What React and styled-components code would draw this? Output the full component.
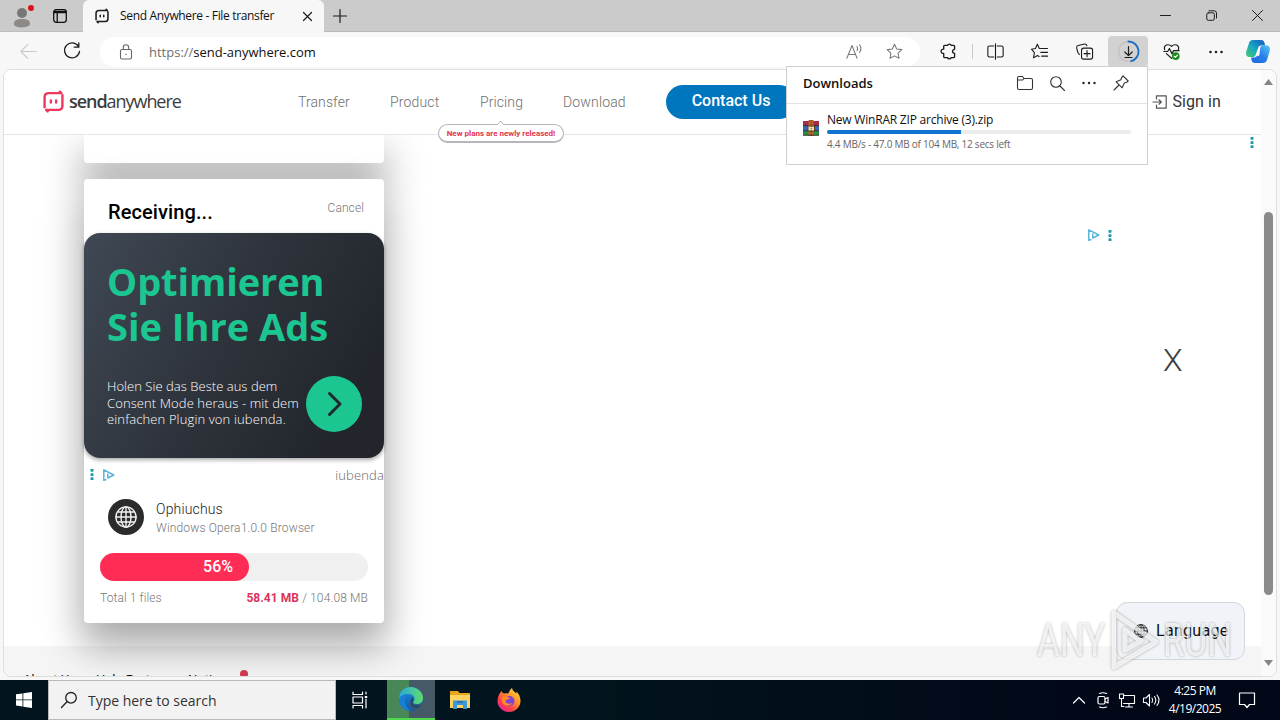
import React from 'react';
import styled, { createGlobalStyle } from 'styled-components';

const GlobalStyle = createGlobalStyle`
  * {
    box-sizing: border-box;
  }

  body {
    margin: 0;
    overflow: hidden;
    font-family: Roboto, "Liberation Sans", sans-serif;
  }

  svg {
    display: block;
    flex: none;
    overflow: visible;
  }
`;

const Screen = styled.div`
  width: 1280px;
  height: 720px;
  display: flex;
  flex-direction: column;
  overflow: hidden;
  background: #f7f7f7;
`;

const Text = styled.span`
  font-family: ${p => p.$family || 'inherit'};
  font-size: ${p => p.$size}px;
  font-weight: ${p => p.$weight || 400};
  line-height: ${p => p.$line || 20}px;
  letter-spacing: ${p => p.$track || 0}px;
  color: ${p => p.$color || '#111'};
  white-space: nowrap;
`;

const ui = '"Open Sans", "Noto Sans", sans-serif';

// ---------- browser chrome ----------

const TabStrip = styled.div`
  height: 32px;
  flex: none;
  display: flex;
  background: #cbcbcb;
`;

const TabTools = styled.div`
  width: 83px;
  padding-left: 12px;
  display: flex;
  align-items: center;
  gap: 19px;
  border-bottom: 1px solid #bdbdbd;
`;

const Tab = styled.div`
  width: 241px;
  padding: 0 12px 0 12px;
  display: flex;
  align-items: center;
  background: #f7f7f7;
  border-radius: 6px 6px 0 0;

  > span {
    margin-left: 11px;
    flex: 1;
  }
`;

const TabRest = styled.div`
  flex: 1;
  padding: 0 17px 0 9px;
  display: flex;
  align-items: center;
  border-bottom: 1px solid #b9b9b9;
`;

const WindowButtons = styled.div`
  margin-left: auto;
  display: flex;
  align-items: center;
  gap: 35px;
`;

const Toolbar = styled.div`
  height: 37px;
  flex: none;
  padding: 4px 0 2px 20px;
  display: flex;
  align-items: center;
`;

const Address = styled.div`
  width: 820px;
  height: 30px;
  flex: none;
  margin-left: 18px;
  padding: 0 17px 0 18px;
  display: flex;
  align-items: center;
  background: #fff;
  border-radius: 15px;

  > span {
    margin-left: 15px;
    flex: 1;
  }

  > svg + svg {
    margin-left: 23px;
  }
`;

const Tools = styled.div`
  flex: 1;
  margin-left: 16px;
  display: flex;
  align-items: center;
`;

const Tool = styled.div`
  width: ${p => p.$width || 44}px;
  height: 31px;
  flex: none;
  display: flex;
  align-items: center;
  justify-content: center;
  border-radius: 4px;
  background: ${p => (p.$active ? '#d2d2d2' : 'none')};
`;

const Divider = styled.div`
  width: 1px;
  height: 15px;
  background: #c8c8c8;
`;

const Stroke = ({ size = 18, color = '#1b1b1b', width = 1.2, box = 20, children }) => (
  <svg
    width={size}
    height={size}
    viewBox={`0 0 ${box} ${box}`}
    fill="none"
    stroke={color}
    strokeWidth={width}
    strokeLinecap="round"
    strokeLinejoin="round"
  >
    {children}
  </svg>
);

const BotGlyph = ({ size, color, width }) => (
  <Stroke size={size} color={color} width={width}>
    <path d="M1.500 13.500V6q0-4 4-4h12l-1.500-1.500M18.500 6.500v7.500q0 4-4 4H3l1.500 1.500M1.500 13.500v2M18.500 4v2.500" />
    <path d="M7.500 9v2M12.500 9v2" />
  </Stroke>
);

const Star = ({ size = 18, color }) => (
  <Stroke size={size} color={color}>
    <path d="M10 1.500l2.600 5.500 6 .8-4.400 4.200 1.100 6L10 15.100 4.700 18l1.100-6L1.400 7.800l6-.8z" />
  </Stroke>
);

const Dots = ({ width = 14, color = '#222', r = 1.3 }) => (
  <svg width={width} height="4" viewBox={`0 0 ${width} 4`} fill={color}>
    <circle cx="1.500" cy="2" r={r} />
    <circle cx={width / 2} cy="2" r={r} />
    <circle cx={width - 1.5} cy="2" r={r} />
  </svg>
);

const Copilot = () => (
  <svg width="24" height="23" viewBox="0 0 24 23">
    <defs>
      <linearGradient id="cpA" x1="0" y1="1" x2="1" y2="0">
        <stop offset="0" stopColor="#49c96c" />
        <stop offset=".45" stopColor="#18a9bd" />
        <stop offset="1" stopColor="#1557c8" />
      </linearGradient>
      <linearGradient id="cpB" x1="0" y1="1" x2="1" y2="0">
        <stop offset="0" stopColor="#1769e0" />
        <stop offset=".5" stopColor="#2b7ee8" />
        <stop offset="1" stopColor="#52c8f5" />
      </linearGradient>
    </defs>
    <path d="M7 0h8c2 0 3 1 3.500 3l.7 2.500h-3.700c-2 0-3 1-3.600 3L9.600 15c-.6 1.500-1.600 2-3.500 2H3.500C.5 17-.5 14.500.3 11.500L3 3c.6-2 2-3 4-3z" fill="url(#cpA)" />
    <path d="M17 23H9c-2 0-3-1-3.500-3L5 17.500h3c2 0 3-1 3.600-3L13.900 8C14.500 6.300 15.500 5.500 17.500 5.500h3c3 0 4 2.500 3.200 5.500L21 20c-.6 2-2 3-4 3z" fill="url(#cpB)" />
    <path d="M10.300 14.500L12.800 7.500c.4-1 .8-1.500 1.700-2l-1 9c-.4 1-.9 1.500-1.900 1.500z" fill="#f7f7f7" />
  </svg>
);

const BrowserTop = () => (
  <>
    <TabStrip>
      <TabTools>
        <svg width="22" height="24" viewBox="0 0 22 24">
          <circle cx="10" cy="9" r="5" fill="#777" />
          <path d="M2 20c0-4 3-5 8-5s8 1 8 5-16 5-16 0z" fill="#8c8986" />
          <circle cx="19" cy="4" r="3" fill="#d8141c" />
        </svg>
        <Stroke size={14} box={14} color="#111" width={1.3}>
          <rect x=".7" y=".7" width="12.600" height="12.600" rx="2.500" />
          <path d="M1 2.500h12M1 3.700h12M4.200 4v9" />
        </Stroke>
      </TabTools>
      <Tab>
        <BotGlyph size={14} color="#1c1c1c" width={2.2} />
        <Text $family={ui} $size={12} $track={-0.34}>Send Anywhere - File transfer</Text>
        <Stroke size={9} box={9} width={1.2}><path d="M.5.5l8 8M8.500.5l-8 8" /></Stroke>
      </Tab>
      <TabRest>
        <Stroke size={14} box={14} width={1.2}><path d="M7 .5v13M.5 7h13" /></Stroke>
        <WindowButtons>
          <Stroke size={11} box={11} width={1}><path d="M.5 5.500h10" /></Stroke>
          <Stroke size={11} box={11} width={1}>
            <rect x=".8" y="2.800" width="7.500" height="7.500" rx="1.500" />
            <path d="M3 .8h5.200q2.300 0 2.300 2.300v5" />
          </Stroke>
          <Stroke size={11} box={11} width={1}><path d="M.5.5l10 10M10.500.5l-10 10" /></Stroke>
        </WindowButtons>
      </TabRest>
    </TabStrip>
    <Toolbar>
      <Stroke size={17} color="#c9c9c9" width={1.3}><path d="M19 10H1M9 2l-8 8 8 8" /></Stroke>
      <Stroke size={45} box={45} width={1.3}>
        <path d="M41.500 17.500a7.500 7.500 0 1 0 1 5M41.800 14v4.200h-4.500" />
      </Stroke>
      <Address>
        <Stroke size={16} box={16} color="#666" width={1.100}>
          <rect x="2.500" y="5.500" width="11" height="9.500" rx="1.500" />
          <path d="M5.300 5.300V3.500a2.700 2.700 0 0 1 5.400 0v1.800M8 10v.6" />
        </Stroke>
        <Text $family={ui} $size={13} $line={18} $track={-0.02}>
          <Text as="span" $size={13} $color="#707070">https://</Text>send-anywhere.com
        </Text>
        <Stroke size={17} color="#777" width={1.2}>
          <path d="M1 18L7 3l6 15M3 13.500h8M13 4q1.500 2.500 0 5M16 2q3 4.500 0 9" />
        </Stroke>
        <Star size={17} color="#777" />
      </Address>
      <Tools>
        <Tool $width={22}>
          <Stroke size={17} box={18} width={1.4}>
            <path d="M5 3.500q0-1 1-1h3a2.200 2.200 0 0 1 4 0h2.500q1 0 1 1v3.200a2 2 0 1 0 0 4.200v3.600q0 1-1 1H13a2.200 2.200 0 0 1-4 0H6q-1 0-1-1V11a2.300 2.300 0 1 1 0-4.500z" />
          </Stroke>
        </Tool>
        <Tool $width={28}><Divider /></Tool>
        <Tool $width={18}>
          <Stroke size={17} width={1.300}>
            <path d="M8 3.500H3q-2 0-2 2v9q0 2 2 2h5M12 3.500h5q2 0 2 2v9q0 2-2 2h-5M10 1v18" />
          </Stroke>
        </Tool>
        <Tool $width={71}>
          <Stroke size={17} width={1.300}>
            <path d="M12 6.500H9.800L7.500 1.500 5.200 6.500l-4.700.8L4 11.200 3 17.500l4.500-2.800 2 1.200M13 6.500h6.500M11.500 11h8M12.500 15.500h7" />
          </Stroke>
        </Tool>
        <Tool $width={18}>
          <Stroke size={17} width={1.3}>
            <rect x="6.500" y="6" width="13" height="13" rx="2.500" />
            <path d="M13 9v7M9.500 12.500h7M4 13.500Q2 12 1.500 9L.8 5.500Q.5 3.500 2.500 3L10 1.200q2-.3 2.800 2" />
          </Stroke>
        </Tool>
        <Tool $width={15} />
        <Tool $active $width={40}>
          <Stroke size={21} box={21} width={1.200}>
            <path d="M10.500 5.500v9M6.800 11l3.700 3.700 3.700-3.700M7 16.500h7" />
            <path d="M10.500.5A10 10 0 0 0 10.500 20.500" stroke="#c4c4c4" strokeWidth="1.500" />
            <path d="M10.500.5a10 10 0 0 1 2.500 19.700" stroke="#1e6fc4" strokeWidth="1.900" />
          </Stroke>
        </Tool>
        <Tool $width={46}>
          <Stroke size={17} width={1.400}>
            <path d="M2 8Q.5 4 4 2.300q3.500-1 6 1.700 2.500-2.700 6-1.700Q19.500 4 18 8M1 10h4.500l2-3.500 3 6 2-3.500H19M4 12.500l6 5.500" />
            <circle cx="15" cy="15.500" r="4.500" fill="#1b8a1b" stroke="none" />
            <path d="M13 15.500l1.500 1.500 2.500-2.800" stroke="#fff" />
          </Stroke>
        </Tool>
        <Tool><Dots /></Tool>
        <Tool $width={40}><Copilot /></Tool>
      </Tools>
    </Toolbar>
  </>
);

// ---------- download flyout ----------

const Flyout = styled.div`
  position: absolute;
  left: 786px;
  top: 66px;
  z-index: 5;
  width: 362px;
  height: 99px;
  background: #fff;
  border: 1px solid #cfcfcf;
`;

const FlyoutHead = styled.div`
  height: 37px;
  padding: 0 18px 4px 16px;
  display: flex;
  align-items: center;
  border-bottom: 1px solid #e2e2e2;

  > span {
    flex: 1;
  }
`;

const FlyoutTools = styled.div`
  display: flex;
  align-items: center;
  gap: 17px;
`;

const FlyoutItem = styled.div`
  padding: 9px 16px 0;
  display: flex;
  gap: 8px;
`;

const RarSlot = styled.div`
  padding-top: 7px;
`;

const FlyoutInfo = styled.div`
  flex: 1;
  display: flex;
  flex-direction: column;
`;

const ThinBar = styled.div`
  height: 4px;
  margin: 3px 0 2px;
  border-radius: 2px;
  background: linear-gradient(90deg, #0f73d0 44%, #ececec 44%);
`;

const RarIcon = () => (
  <svg width="16" height="16" viewBox="0 0 16 16">
    <rect y="1" width="16" height="5" fill="#a32c4d" />
    <rect y="6" width="16" height="5" fill="#3568b8" />
    <rect y="11" width="16" height="4.500" fill="#2f8a42" />
    <rect x="5.500" width="5" height="16" fill="#b8622c" />
    <path d="M5 6h6.500v5H5z" fill="#f0dcae" stroke="#58402a" strokeWidth="1" />
    <path d="M0 5.700h5M11 5.700h5M0 10.800h5M11 10.800h5M0 15.300h16" stroke="#222" strokeWidth=".7" />
    <path d="M8.200 0v16" stroke="#6c4526" strokeDasharray="1 1" />
  </svg>
);

const Downloads = () => (
  <Flyout>
    <FlyoutHead>
      <Text $family={ui} $size={13} $weight={600} $track={0}>Downloads</Text>
      <FlyoutTools>
        <Stroke size={16} box={16} color="#333" width={1.100}>
          <path d="M.5 4.500V3q0-1.500 1.500-1.500h3.500L7 3.500h7q1.500 0 1.500 1.500v8q0 1.500-1.500 1.500H2Q.5 14.500.5 13zM.5 5h5.200L7 3.500" />
        </Stroke>
        <Stroke size={15} box={15} color="#333" width={1.100}>
          <circle cx="6" cy="6" r="5.300" /><path d="M10 10l4.500 4.500" />
        </Stroke>
        <Dots width={14} r={1.2} />
        <Stroke size={16} box={16} color="#333" width={1.100}>
          <path d="M10 .8l5.200 5.200-1.500 1.200-2.500.9-2 4.700-6-6 4.700-2L8.800 2.300zM6 10L1 15" />
        </Stroke>
      </FlyoutTools>
    </FlyoutHead>
    <FlyoutItem>
      <RarSlot><RarIcon /></RarSlot>
      <FlyoutInfo>
        <Text $family={ui} $size={12} $line={14} $track={-0.21}>New WinRAR ZIP archive (3).zip</Text>
        <ThinBar />
        <Text $family={ui} $size={10} $line={16} $color="#666" $track={-0.24}>
          4.4 MB/s - 47.0 MB of 104 MB, 12 secs left
        </Text>
      </FlyoutInfo>
    </FlyoutItem>
  </Flyout>
);

// ---------- page ----------

const Frame = styled.div`
  position: relative;
  height: 608px;
  flex: none;
  margin: 0 3px;
  display: flex;
  overflow: hidden;
  background: #fff;
  border: 1px solid #dedede;
  border-radius: 8px;
`;

const Page = styled.div`
  flex: 1;
  display: flex;
  flex-direction: column;
`;

const Header = styled.header`
  position: relative;
  z-index: 2;
  height: 65px;
  flex: none;
  padding: 0 40px 0 39px;
  display: flex;
  align-items: center;
  background: #fff;
  border-bottom: 1px solid #e6e6e6;
`;

const Logo = styled.div`
  width: 255px;
  display: flex;
  align-items: center;
  gap: 5px;
  padding-bottom: 2px;
`;

const Nav = styled.nav`
  display: flex;
  gap: 40px;
`;

const NavItem = styled.div`
  position: relative;
  width: ${p => p.$width}px;
`;

const Balloon = styled.div`
  position: absolute;
  top: 32px;
  left: -42px;
  width: 126px;
  height: 19px;
  padding-top: 1px;
  display: flex;
  align-items: center;
  justify-content: center;
  background: #fff;
  border: 1px solid #b5b5bb;
  border-bottom-width: 2px;
  border-radius: 10px;
`;

const BalloonTip = styled.svg`
  position: absolute;
  top: -5px;
  left: 57px;
`;

const ContactButton = styled.div`
  width: 130px;
  height: 34px;
  margin-left: 40px;
  padding-bottom: 3px;
  display: flex;
  align-items: center;
  justify-content: center;
  background: #0076be;
  border-radius: 17px;
`;

const SignIn = styled.div`
  margin-left: auto;
  display: flex;
  align-items: center;
  gap: 5px;
`;

const Body = styled.main`
  flex: 1;
  min-height: 0;
  display: flex;
  flex-direction: column;
`;

const Content = styled.div`
  position: relative;
  z-index: 1;
  height: 511px;
  flex: none;
  padding-left: 80px;
`;

const Card = styled.section`
  width: 300px;
  height: ${p => p.$height}px;
  margin-bottom: 16px;
  background: #fff;
  border-radius: ${p => (p.$cut ? '0 0 4px 4px' : '4px')};
  box-shadow: 0 20px 38px 3px rgba(0, 0, 0, .34);
  position: relative;
  z-index: ${p => (p.$cut ? 0 : 1)};
`;

const CardHead = styled.div`
  height: 54px;
  padding: 19px 20px 0 24px;
  display: flex;
  justify-content: space-between;
`;

const Ad = styled.div`
  height: 225px;
  padding: 26px 22px 0 23px;
  background: linear-gradient(118deg, #3f4854 0%, #2f343c 45%, #22252c 85%);
  border-radius: 16px;
  box-shadow: 0 2px 4px rgba(0, 0, 0, .35);
`;

const AdTitle = styled.div`
  font: 700 38px/45px "Open Sans", "Noto Sans", sans-serif;
  letter-spacing: ${p => p.$track}px;
  color: #1cc691;
  white-space: nowrap;
`;

const AdRow = styled.div`
  margin-top: 27px;
  display: flex;
  justify-content: space-between;
`;

const AdCopy = styled.div`
  padding-top: 2px;
  display: flex;
  flex-direction: column;
`;

const Arrow = styled.div`
  width: 56px;
  height: 56px;
  display: flex;
  align-items: center;
  justify-content: center;
  border-radius: 50%;
  background: #1cc691;
`;

const AdFoot = styled.div`
  height: 33px;
  padding-left: 6px;
  display: flex;
  align-items: center;

  > svg + svg {
    margin-left: 9px;
  }

  > span {
    margin-left: auto;
    padding-top: 1px;
  }
`;

const Device = styled.div`
  padding: 8px 24px 0;
  display: flex;
  gap: 12px;
`;

const DeviceBadge = styled.div`
  width: 36px;
  height: 36px;
  display: flex;
  align-items: center;
  justify-content: center;
  border-radius: 50%;
  background: #2b2b2b;
`;

const DeviceText = styled.div`
  height: 36px;
  display: flex;
  flex-direction: column;
`;

const Progress = styled.div`
  height: 28px;
  margin: 18px 16px 0;
  border-radius: 14px;
  background: #f0f0f0;
`;

const ProgressFill = styled.div`
  height: 28px;
  padding-right: 16px;
  display: flex;
  align-items: center;
  justify-content: flex-end;
  border-radius: 14px;
  background: #ff2d55;
`;

const Totals = styled.div`
  padding: 7px 16px 0;
  display: flex;
  justify-content: space-between;
`;

const Footer = styled.footer`
  flex: 1;
  padding: 24px 0 0 19px;
  display: flex;
  background: #f5f5f5;
`;

const FooterLink = styled(Text)`
  width: ${p => p.$width}px;
`;

const RedDot = styled.div`
  width: 8px;
  height: 8px;
  border-radius: 50%;
  background: #d63a52;
`;

const Scrollbar = styled.div`
  width: 15px;
  padding: 9px 0 10px;
  display: flex;
  flex-direction: column;
  align-items: center;
  background: #fafafa;
`;

const Thumb = styled.div`
  width: 9px;
  height: 383px;
  margin-top: 127px;
  margin-bottom: auto;
  border-radius: 5px;
  background: #8a8a8a;
`;

// ads and the language button float above the page content
const Float = styled.div`
  position: absolute;
  left: ${p => p.$x}px;
  top: ${p => p.$y}px;
  z-index: 3;
  display: flex;
  align-items: center;
  gap: 8px;
`;

const LanguageButton = styled(Float)`
  width: 129px;
  height: 58px;
  padding-left: 17px;
  background: #f0f3f7;
  border: 1px solid #d3d6da;
  border-radius: 11px;
`;

const Watermark = styled(Float)`
  z-index: 4;
  gap: 2px;
  opacity: .85;
  filter: drop-shadow(0 0 1.500px rgba(0, 0, 0, .45));
`;

const MarkText = styled.span`
  font: 400 46px/44px Roboto, sans-serif;
  display: block;
  width: ${p => p.$width}px;
  color: rgba(255, 255, 255, .75);
  transform: scaleX(.76);
  transform-origin: left;
`;

const AdDots = () => (
  <svg width="4" height="11" viewBox="0 0 4 11" fill="#1c9aad">
    <rect x=".5" y="0" width="3" height="2.700" rx=".6" />
    <rect x=".5" y="4.200" width="3" height="2.700" rx=".6" />
    <rect x=".5" y="8.300" width="3" height="2.700" rx=".6" />
  </svg>
);

const AdPlay = () => (
  <svg width="12" height="12" viewBox="0 0 12 12" fill="none" stroke="#5cb3dc" strokeWidth="1.500" strokeLinejoin="round">
    <path d="M3.500 10.500L.8 11.200V.8l10 5.200-6 3V4.500" />
  </svg>
);

const Globe = ({ size, color, width = 1.2 }) => (
  <Stroke size={size} box={24} color={color} width={width}>
    <circle cx="12" cy="12" r="11" />
    <ellipse cx="12" cy="12" rx="5.500" ry="11" />
    <path d="M12 1v22M1 12h22M3 6.500h18M3 17.500h18" />
  </Stroke>
);

const WebPage = () => (
  <Frame>
    <Page>
      <Header>
        <Logo>
          <BotGlyph size={21} color="#f0385f" width={2.3} />
          <Text $family={ui} $size={18} $weight={600} $track={-1.05} $color="#3c3c3c">
            send<Text as="span" $size={18} $track={-1.05} $color="#3c3c3c">anywhere</Text>
          </Text>
        </Logo>
        <Nav>
          <NavItem $width={52}><Text $size={14} $weight={300} $color="#6f6f6f" $track={0.1}>Transfer</Text></NavItem>
          <NavItem $width={50}><Text $size={14} $weight={300} $color="#6f6f6f" $track={0.15}>Product</Text></NavItem>
          <NavItem $width={43}>
            <Text $size={14} $weight={300} $color="#6f6f6f" $track={0.1}>Pricing</Text>
            <Balloon>
              <BalloonTip width="9" height="5" viewBox="0 0 9 5">
                <path d="M1 5l3.500-4L8 5" fill="#fff" stroke="#b5b5bb" />
              </BalloonTip>
              <Text $size={8} $weight={700} $line={12} $color="#e2334f">New plans are newly released!</Text>
            </Balloon>
          </NavItem>
          <NavItem $width={63}><Text $size={14} $weight={300} $color="#6f6f6f" $track={0.15}>Download</Text></NavItem>
        </Nav>
        <ContactButton>
          <Text $size={16} $weight={500} $color="#fff">Contact Us</Text>
        </ContactButton>
        <SignIn>
          <Stroke size={14} box={14} color="#555" width={1.200}>
            <path d="M3.500 4V.8h9.700v12.400H3.500V10M0 7h8M6 4.800L8.300 7 6 9.200" />
          </Stroke>
          <Text $size={16} $color="#333" $track={0.1}>Sign in</Text>
        </SignIn>
      </Header>
      <Body>
        <Content>
          <Card $cut $height={28} />
          <Card $height={444}>
            <CardHead>
              <Text $size={20} $weight={500} $line={28} $color="#000" $track={0.1}>Receiving...</Text>
              <Text $size={12} $weight={300} $color="#777" $track={0.1}>Cancel</Text>
            </CardHead>
            <Ad>
              <AdTitle $track={-0.1}>Optimieren</AdTitle>
              <AdTitle $track={0}>Sie Ihre Ads</AdTitle>
              <AdRow>
                <AdCopy>
                  <Text $family={ui} $size={13} $weight={300} $line={16.5} $color="#fff" $track={0.04}>Holen Sie das Beste aus dem</Text>
                  <Text $family={ui} $size={13} $weight={300} $line={16.5} $color="#fff" $track={0.1}>Consent Mode heraus - mit dem</Text>
                  <Text $family={ui} $size={13} $weight={300} $line={16.5} $color="#fff" $track={0.13}>einfachen Plugin von iubenda.</Text>
                </AdCopy>
                <Arrow>
                  <Stroke size={24} box={24} color="#23282f" width={3}><path d="M7.500 1.500L18 12 7.500 22.500" /></Stroke>
                </Arrow>
              </AdRow>
            </Ad>
            <AdFoot>
              <AdDots />
              <AdPlay />
              <Text $family={ui} $size={13} $weight={300} $color="#666" $track={0.15}>iubenda</Text>
            </AdFoot>
            <Device>
              <DeviceBadge><Globe size={22} color="#f2f2f2" width={1.500} /></DeviceBadge>
              <DeviceText>
                <Text $size={14} $weight={300} $color="#222" $track={0.15}>Ophiuchus</Text>
                <Text $size={12} $weight={300} $line={18} $color="#777" $track={0.15}>Windows Opera1.0.0 Browser</Text>
              </DeviceText>
            </Device>
            <Progress>
              <ProgressFill style={{ width: `${(149 / 268) * 100}%` }}>
                <Text $size={16} $weight={500} $color="#fff">56%</Text>
              </ProgressFill>
            </Progress>
            <Totals>
              <Text $size={12} $weight={300} $color="#777" $track={0.1}>Total 1 files</Text>
              <Text $size={12} $weight={300} $color="#777" $track={0.12}>
                <Text as="b" $size={12} $weight={700} $color="#d9345a" $track={0.07}>58.41 MB</Text> / 104.08 MB
              </Text>
            </Totals>
          </Card>
        </Content>
        <Footer>
          <FooterLink $size={13} $width={73}>About Us</FooterLink>
          <FooterLink $size={13} $width={92}>Help Partners</FooterLink>
          <FooterLink $size={13} $width={52}>Notice</FooterLink>
          <RedDot />
        </Footer>
      </Body>
    </Page>
    <Scrollbar>
      <svg width="9" height="6" viewBox="0 0 9 6" fill="#858585"><path d="M0 6L4.500 0 9 6z" /></svg>
      <Thumb />
      <svg width="9" height="6" viewBox="0 0 9 6" fill="#858585"><path d="M0 0h9L4.500 6z" /></svg>
    </Scrollbar>
    <Float $x={1246} $y={67}><AdDots /></Float>
    <Float $x={1084} $y={159}><AdPlay /><AdDots /></Float>
    <Float $x={1159} $y={275}>
      <Text $size={32} $line={30} $weight={300} $color="#3c4043" $track={-0.5}>X</Text>
    </Float>
    <LanguageButton $x={1112} $y={532}>
      <Globe size={14} color="#333" width={1.700} />
      <Text $size={16} $color="#111" $track={0.3}>Language</Text>
    </LanguageButton>
    <Watermark $x={1033} $y={540}>
      <MarkText $width={70}>ANY</MarkText>
      <svg width="52" height="60" viewBox="0 0 52 60" fill="none" stroke="rgba(255,255,255,.8)" strokeWidth="5" strokeLinejoin="round">
        <path d="M5 3v54l42-25z" /><path d="M16 20v20l16-9z" />
      </svg>
      <MarkText $width={70}>RUN</MarkText>
    </Watermark>
  </Frame>
);

// ---------- taskbar ----------

const TaskbarRow = styled.div`
  height: 40px;
  margin-top: auto;
  flex: none;
  display: flex;
  align-items: center;
  background: linear-gradient(90deg, #02141d 0%, #02141d 45%, #020818 85%, #020818 100%);
`;

const TaskSlot = styled.div`
  width: ${p => p.$width || 48}px;
  height: 40px;
  display: flex;
  align-items: center;
  justify-content: center;
  ${p => p.$active && `
    margin-left: 3px;
    background: linear-gradient(90deg, #488757 46%, #455a66 46%);
    border-bottom: 2px solid #4fd84a;
  `}
`;

const SearchBox = styled.div`
  width: 288px;
  height: 40px;
  padding-left: 12px;
  display: flex;
  align-items: center;
  gap: 11px;
  background: #f2f2f2;
  border: 1px solid #b9b9b9;

  > span {
    padding-top: 1px;
  }
`;

const Tray = styled.div`
  margin-left: auto;
  padding-right: 25px;
  display: flex;
  align-items: center;
  gap: 8px;
`;

const Clock = styled.div`
  width: 56px;
  margin-right: 8px;
  display: flex;
  flex-direction: column;
  align-items: center;
`;

const EdgeIcon = () => (
  <svg width="24" height="24" viewBox="0 0 24 24">
    <defs>
      <linearGradient id="edTop" x1="0" y1="0" x2="1" y2="0">
        <stop offset="0" stopColor="#2aa9e0" />
        <stop offset="1" stopColor="#5edc6a" />
      </linearGradient>
      <linearGradient id="edLow" x1="0" y1="0" x2="0" y2="1">
        <stop offset="0" stopColor="#1d8fdc" />
        <stop offset="1" stopColor="#1256a8" />
      </linearGradient>
    </defs>
    <circle cx="12" cy="12" r="12" fill="url(#edLow)" />
    <path d="M0 12C0 4 6 0 12 0s12 5 12 11c0 4-3 6-6 6s-4.500-1-3.500-2.500c3-4-1-7.500-5-7.500-5 0-8 2-9.500 5z" fill="url(#edTop)" />
    <path d="M9 8c-5 3-4 12 3 15.500C4 24 0 18 0 12c1.500-3 5-5 9-4z" fill="#1a7fd4" />
    <path d="M14.500 12c0 1-1.500 2-1 3.500 1 3 6 2.500 9 1l1.500 3.500-5 3.500c-3-.5-4.500-1-5.500-2-4-2-3.500-7.500-.5-10 1-.5 1.500 0 1.500.5z" fill="#455a66" />
    <path d="M13 11c-3 3-2 9 4 10.500 2-.5 4-2 5.300-4-3 1.500-7.300 2-8.800-1-.5-1.500 1-2.500 1-4.500 0-.8-.8-1.500-1.500-1z" fill="#1a4a78" />
  </svg>
);

const FolderIcon = () => (
  <svg width="22" height="20" viewBox="0 0 22 20">
    <path d="M1 1h8l1.500 2H21v15H1z" fill="#e9a520" />
    <path d="M1 5h20v13H1z" fill="#fcd462" />
    <path d="M4 19v-8.500h14V19h-4v-4H8v4z" fill="#3f97d8" />
    <path d="M8 11h6v2H8z" fill="#2a72b0" />
  </svg>
);

const FirefoxIcon = () => (
  <svg width="24" height="24" viewBox="0 0 24 24">
    <defs>
      <linearGradient id="fx" x1="1" y1="0" x2=".2" y2="1">
        <stop offset="0" stopColor="#ffe84a" />
        <stop offset=".4" stopColor="#ff9a26" />
        <stop offset=".75" stopColor="#ff3d4e" />
        <stop offset="1" stopColor="#e0259a" />
      </linearGradient>
    </defs>
    <path d="M4.500 3c.5 1.500 1.500 2.300 3 2.500 1.500-.5 3-.5 4 0 .5-2.500 2-4.500 3.500-5.500.5 3 3 4 4.500 5.500V3.500C22 6 23.500 9 23.500 13c0 6-5 11-11.500 11S.5 19 .5 13C.5 9 2 6 4.500 3z" fill="url(#fx)" />
    <circle cx="12.500" cy="13" r="5" fill="#7f43d6" />
    <path d="M5 9.500c3-2 6-.5 8.500 1-2 .3-3 1.500-5 1.700-.5 3 3.500 4.500 6.500 2.800-1 3-7 4-9.500 0-1-2-1-4-.5-5.500z" fill="#ff8a26" />
  </svg>
);

const Taskbar = () => (
  <TaskbarRow>
    <TaskSlot>
      <svg width="16" height="16" viewBox="0 0 16 16" fill="#fff">
        <path d="M0 2.300l6.500-.9v6.100H0zM7.300 1.300L16 0v7.500H7.300zM0 8.300h6.500v6.200L0 13.600zM7.300 8.300H16V16l-8.700-1.300z" />
      </svg>
    </TaskSlot>
    <SearchBox>
      <Stroke size={16} box={16} color="#222" width={1.300}>
        <circle cx="10" cy="5.800" r="5.300" /><path d="M6 9.700L.5 15.500" />
      </Stroke>
      <Text $family={ui} $size={14} $line={22} $color="#333" $track={-0.02}>Type here to search</Text>
    </SearchBox>
    <TaskSlot>
      <Stroke size={16} box={16} color="#fff" width={1.200}>
        <path d="M1 0v2.500h9.500V0M1 16v-2.500h9.500V16M1 5h9.500v6H1zM14 0v2M14 7v9" />
        <path d="M14 4v2" strokeWidth="2.500" strokeLinecap="butt" />
      </Stroke>
    </TaskSlot>
    <TaskSlot $active><EdgeIcon /></TaskSlot>
    <TaskSlot $width={50}><FolderIcon /></TaskSlot>
    <TaskSlot><FirefoxIcon /></TaskSlot>
    <Tray>
      <Stroke size={14} box={14} color="#fff" width={1.200}><path d="M.5 10L6 4.500 11.500 10" /></Stroke>
      <Stroke size={16} box={16} color="#fff" width={1.200}>
        <rect x="3" y="4.500" width="7" height="7.500" rx="1.500" />
        <path d="M10 7l3-1.500v5.500L10 9.500M4.500 1.500Q8 0 11.500 1.500M4.500 15Q8 16.500 11.500 15" />
      </Stroke>
      <Stroke size={16} box={16} color="#fff" width={1.100}>
        <path d="M5 3.500h10.500v8H4.500M10 11.500v3M6.500 15h7M2.500 6.500v8H5" />
        <rect x=".5" y="2" width="4" height="4.500" />
      </Stroke>
      <Stroke size={16} box={16} color="#fff" width={1.100}>
        <path d="M.5 6v4.500H3L6.500 14V2.500L3 6zM9 6q1.500 2.200 0 4.500M11.500 4.500q2.700 3.700 0 7.500M14 3q4 5.200 0 10.500" />
      </Stroke>
      <Clock>
        <Text $family={ui} $size={12} $line={18} $color="#fff" $track={-0.5}>4:25 PM</Text>
        <Text $family={ui} $size={12} $line={18} $color="#fff" $track={-0.5}>4/19/2025</Text>
      </Clock>
      <Stroke size={16} box={16} color="#fff" width={1.200}>
        <path d="M.5 1h15v11.500h-5L8 15.500l-2.500-3h-5z" />
      </Stroke>
    </Tray>
  </TaskbarRow>
);

const App = () => (
  <>
    <GlobalStyle />
    <Screen>
      <BrowserTop />
      <WebPage />
      <Taskbar />
    </Screen>
    <Downloads />
  </>
);

export default App;
